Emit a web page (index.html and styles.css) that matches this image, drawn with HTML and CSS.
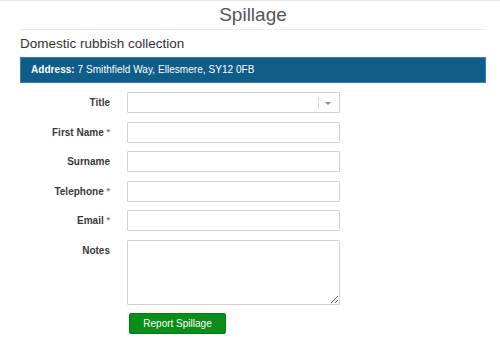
FILE: index.html
```html
<!DOCTYPE html>
<html lang="en">
<head>
<meta charset="utf-8">
<title>Spillage</title>
<link rel="stylesheet" href="styles.css">
</head>
<body>
<div class="page">
  <h1 class="page-title">Spillage</h1>
  <div class="content">
    <h2 class="section-title">Domestic rubbish collection</h2>
    <div class="address-bar"><strong>Address:</strong> 7 Smithfield Way, Ellesmere, SY12 0FB</div>
    <form class="form">
      <label class="label">Title</label>
      <div class="select">
        <span class="select-value"></span>
        <span class="select-sep"></span>
        <span class="select-caret"></span>
      </div>

      <label class="label">First Name <span class="req">*</span></label>
      <input class="input" type="text">

      <label class="label">Surname</label>
      <input class="input" type="text">

      <label class="label">Telephone <span class="req">*</span></label>
      <input class="input" type="text">

      <label class="label">Email <span class="req">*</span></label>
      <input class="input" type="text">

      <label class="label">Notes</label>
      <textarea class="textarea"></textarea>

      <span></span>
      <div class="actions"><button class="btn" type="button">Report Spillage</button></div>
    </form>
  </div>
</div>
</body>
</html>
```

FILE: styles.css
```css
* { box-sizing: border-box; }
html, body {
  margin: 0;
  padding: 0;
  background: #fff;
}
body {
  font-family: "Liberation Sans", Arial, sans-serif;
  color: #333;
}
.page {
  border-top: 1px solid #e6e6e6;
}
.page-title {
  margin: 0;
  font-size: 19px;
  font-weight: normal;
  line-height: 28px;
  color: #555;
  text-align: center;
  padding-left: 6px;
}
.content {
  margin: 0 14px 0 20px;
  border-top: 1px solid #ebebe8;
}
.section-title {
  margin: 0;
  font-size: 13.5px;
  font-weight: normal;
  line-height: 27px;
  color: #333;
}
.address-bar {
  background: #0f5e8a;
  border: 1px solid #3d7fa5;
  color: #fff;
  font-size: 10px;
  line-height: 24px;
  padding-left: 10px;
  letter-spacing: 0.05px;
}
.address-bar strong { font-weight: bold; }
.form {
  display: grid;
  grid-template-columns: 90px 213px;
  column-gap: 17px;
  row-gap: 8.5px;
  margin-top: 9px;
  align-items: start;
}
.label {
  font-size: 10px;
  font-weight: bold;
  line-height: 21px;
  text-align: right;
  color: #3a3a3a;
}
.req {
  color: #d9534f;
  font-size: 9px;
  vertical-align: 1px;
}
.input, .select, .textarea {
  width: 213px;
  height: 21px;
  border: 1px solid #d2d2d2;
  border-radius: 1px;
  background: #fff;
  margin: 0;
  padding: 0 4px;
  font-family: inherit;
  font-size: 10px;
}
.select {
  display: flex;
  align-items: center;
  padding: 0;
}
.select-value { flex: 1; }
.select-sep {
  width: 1px;
  height: 12px;
  background: #d6d6d6;
}
.select-caret {
  width: 0;
  height: 0;
  margin: 1px 8px 0 6px;
  border-left: 3px solid transparent;
  border-right: 3px solid transparent;
  border-top: 3px solid #888;
}
.textarea {
  height: 65px;
  resize: vertical;
}
.actions {
  padding-left: 2px;
}
.btn {
  width: 97px;
  height: 21px;
  background: #0b8d19;
  border: 1px solid #087a15;
  border-radius: 2px;
  color: #fff;
  font-family: inherit;
  font-size: 10px;
  padding: 0;
  margin: 0;
  cursor: pointer;
}
```
